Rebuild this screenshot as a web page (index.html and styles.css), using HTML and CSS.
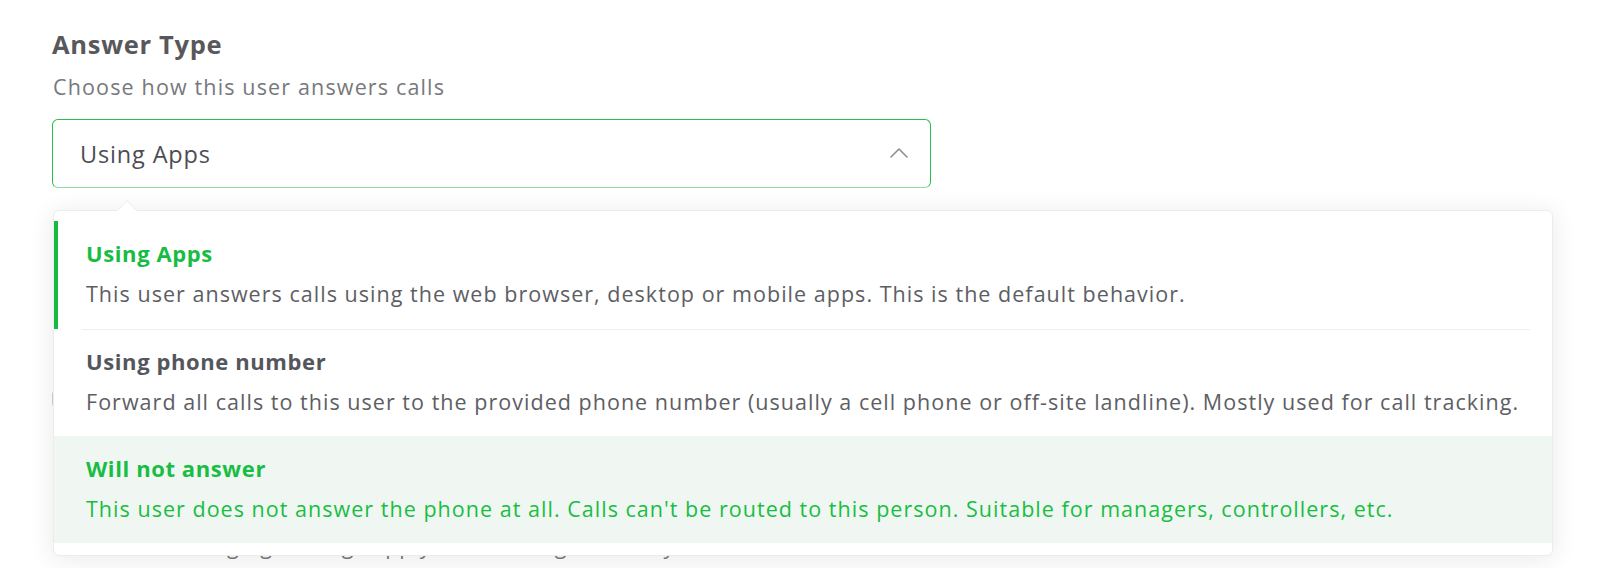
FILE: index.html
```html
<!DOCTYPE html>
<html lang="en">
<head>
<meta charset="utf-8">
<title>Answer Type</title>
<link rel="stylesheet" href="styles.css">
</head>
<body>
<div class="page">
  <section class="field">
    <h2 class="field-title">Answer Type</h2>
    <p class="field-hint">Choose how this user answers calls</p>
    <div class="select">
      <span class="select-value">Using Apps</span>
      <svg class="select-chevron" width="20" height="12" viewBox="0 0 20 12" aria-hidden="true">
        <path d="M2 10 L10 2 L18 10" fill="none" stroke="#8a8d94" stroke-width="1.6" stroke-linecap="round" stroke-linejoin="round"/>
      </svg>
    </div>
    <div class="under">
      <div class="under-check"><span class="checkbox"></span></div>
      <div class="under-row">
        <span class="under-text">Ringing settings apply to incoming calls only</span>
      </div>
    </div>
    <div class="menu">
      <span class="menu-notch"></span>
      <div class="option option-selected">
        <div class="option-title">Using Apps</div>
        <div class="option-desc">This user answers calls using the web browser, desktop or mobile apps. This is the default behavior.</div>
      </div>
      <div class="option option-sep">
        <div class="option-title">Using phone number</div>
        <div class="option-desc">Forward all calls to this user to the provided phone number (usually a cell phone or off-site landline). Mostly used for call tracking.</div>
      </div>
      <div class="option option-hover">
        <div class="option-title">Will not answer</div>
        <div class="option-desc">This user does not answer the phone at all. Calls can't be routed to this person. Suitable for managers, controllers, etc.</div>
      </div>
    </div>
  </section>
</div>
</body>
</html>
```
FILE: styles.css
```css
* { box-sizing: border-box; }
html, body { margin: 0; padding: 0; background: #ffffff; }
body {
  font-family: "Open Sans", Lato, "Noto Sans", sans-serif;
  color: #5d5e64;
  width: 1600px;
  height: 568px;
  overflow: hidden;
}
.page { padding: 30px 0 0 52px; }
.field { position: relative; width: 1501px; }
.field-title {
  margin: 0;
  font-size: 25.5px;
  line-height: 28px;
  font-weight: 700;
  color: #58585c;
  letter-spacing: 0.7px;
}
.field-hint {
  margin: 15px 0 0 1px;
  font-size: 21.5px;
  line-height: 28px;
  color: #77787c;
  letter-spacing: 1.15px;
}
.select {
  margin-top: 18px;
  width: 879px;
  height: 69px;
  border: 1px solid #21c14a;
  border-bottom-color: #8fdca3;
  border-radius: 6px;
  display: flex;
  align-items: center;
  justify-content: space-between;
  padding: 0 21px 0 27px;
  background: #fff;
}
.select-value {
  font-size: 23.5px;
  color: #4c4d55;
  letter-spacing: 0.85px;
}
.select-chevron { display: block; margin-top: -2px; }
.under { display: flex; flex-direction: column; }
.under-check { margin-top: 203px; height: 16px; }
.checkbox {
  display: block;
  width: 16px;
  height: 16px;
  border: 1px solid #cfd1d6;
  border-radius: 3px;
}
.under-row { margin-top: 125px; padding-left: 140px; }
.under-text { font-size: 21.5px; line-height: 28px; color: #77787c; letter-spacing: 1px; }
.menu {
  position: absolute;
  left: 1px;
  top: 180px;
  width: 1500px;
  background: #fff;
  border: 1px solid #ececee;
  border-radius: 6px;
  box-shadow: 0 3px 24px rgba(30, 35, 50, 0.1);
  padding: 10px 0 12px 0;
}
.menu-notch {
  position: absolute;
  left: 66px;
  top: -8px;
  width: 14px;
  height: 14px;
  background: #fff;
  transform: rotate(45deg);
  border-left: 1px solid #eeeef0;
  border-top: 1px solid #eeeef0;
}
.option {
  position: relative;
  padding: 19px 0 20px 32px;
}
.option-title {
  margin-top: -1px;
  font-size: 22px;
  line-height: 28px;
  font-weight: 700;
  color: #55565c;
  letter-spacing: 0.6px;
}
.option-desc {
  margin-top: 13px;
  font-size: 21.5px;
  line-height: 28px;
  color: #5d5e64;
  letter-spacing: 1.03px;
}
.option-selected { border-left: 4px solid #17ba40; padding-left: 28px; padding-bottom: 21px; }
.option-selected .option-title { color: #17bd43; }
.option-sep::before {
  content: "";
  position: absolute;
  top: 0;
  left: 28px;
  right: 22px;
  height: 1px;
  background: #efeff1;
}
.option-hover { background: #f0f7f2; }
.option-hover .option-title,
.option-hover .option-desc { color: #19bd44; }
```
